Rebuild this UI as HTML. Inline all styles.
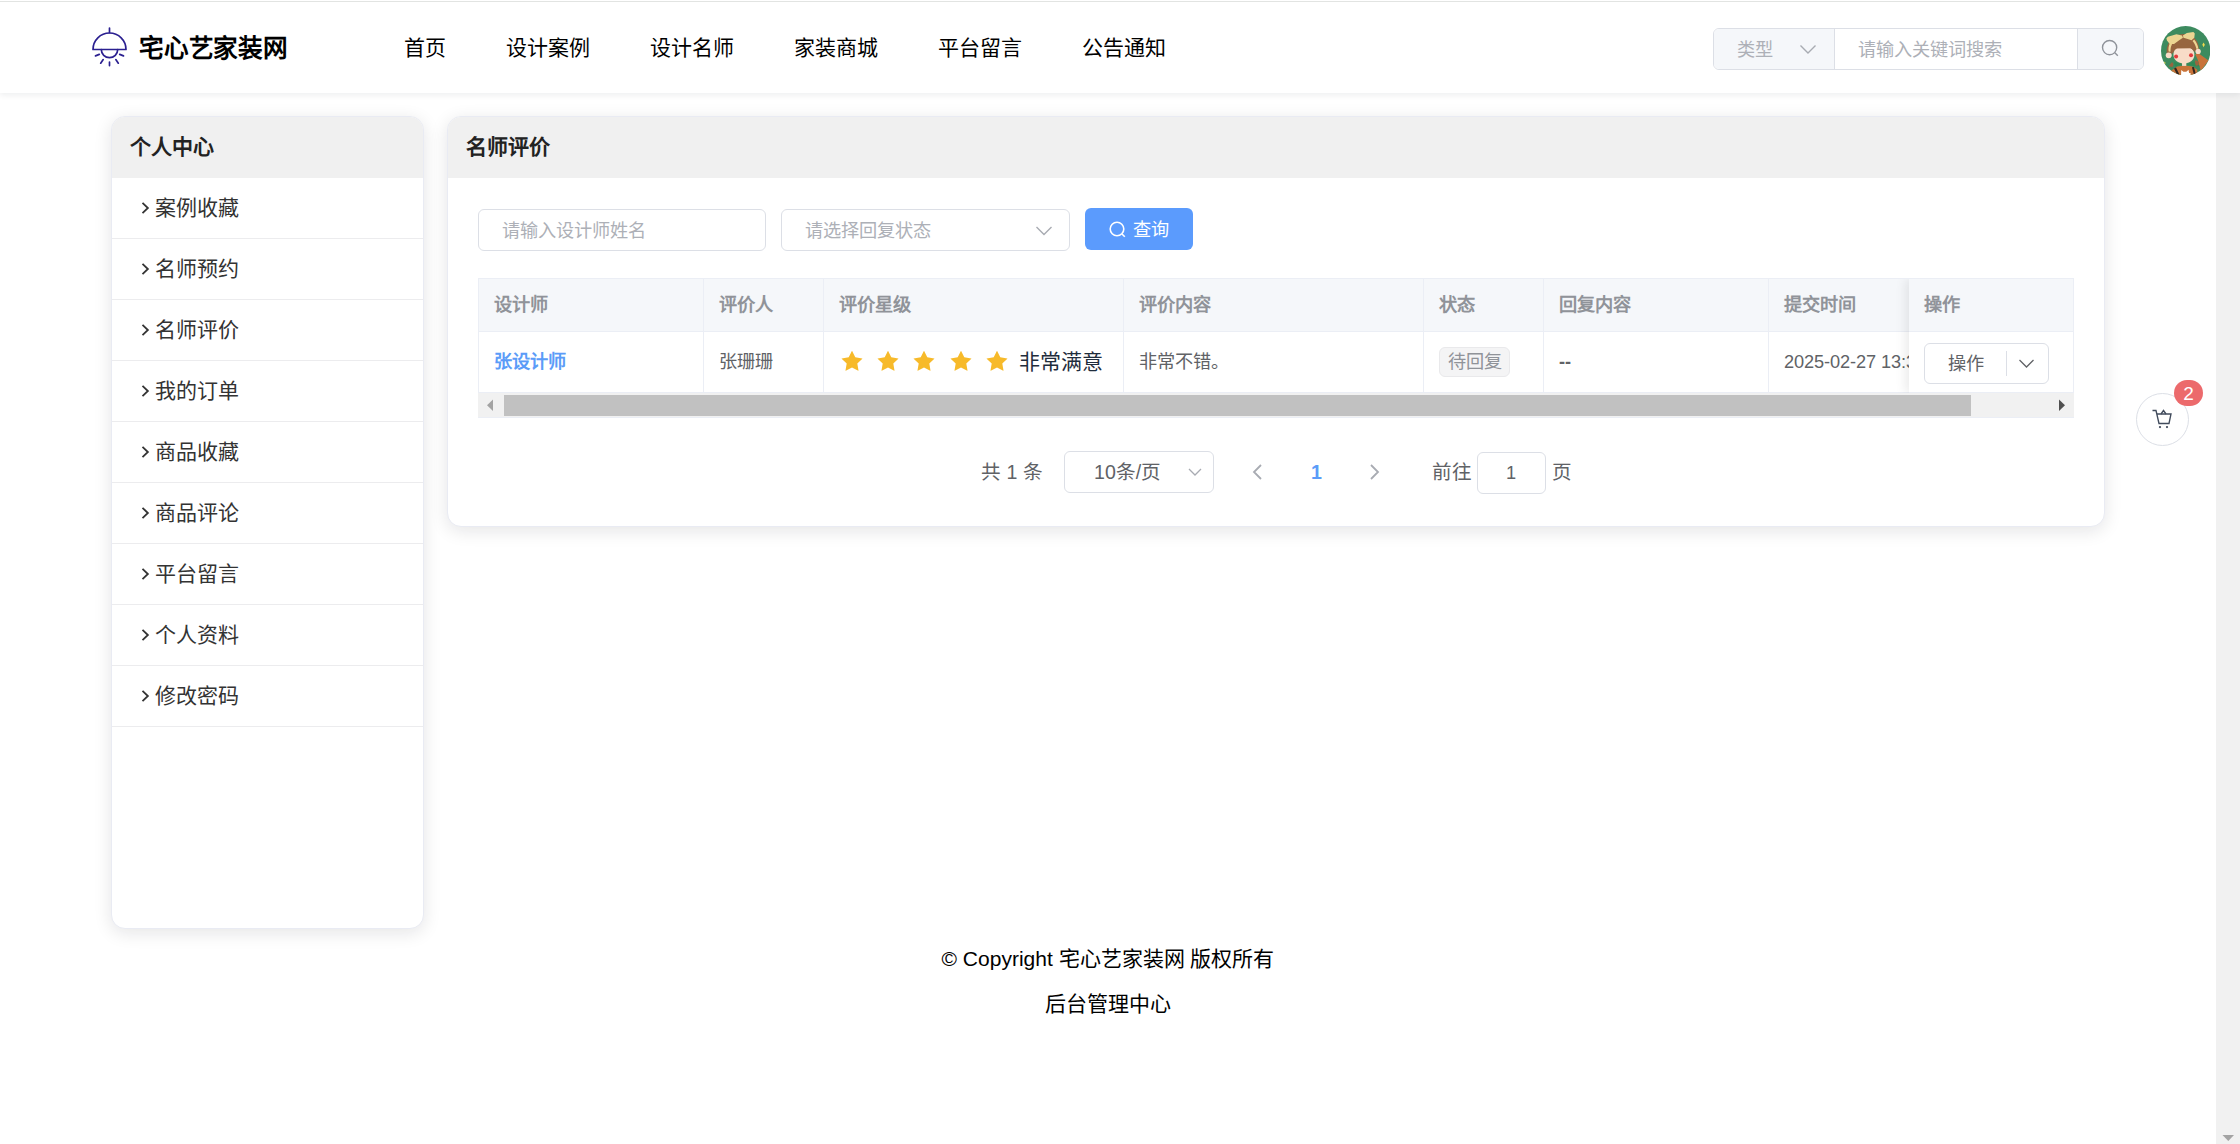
<!DOCTYPE html>
<html lang="zh-CN">
<head>
<meta charset="utf-8">
<title>宅心艺家装网</title>
<style>
*{box-sizing:border-box;margin:0;padding:0}
html,body{width:2240px;height:1144px;overflow:hidden;background:#fff}
body{position:relative;font-family:"Liberation Sans",sans-serif;color:#303133;font-size:18.2px}
.abs{position:absolute}
.t{position:absolute;white-space:nowrap;line-height:1}
/* header */
#hdr{position:absolute;left:0;top:0;width:2240px;height:93px;background:#fff;box-shadow:0 2px 6px rgba(0,21,41,.075);z-index:5}
#logo-t{left:139px;top:36.6px;font-size:24.6px;font-weight:700;color:#000;letter-spacing:-.2px}
.nav{top:37.4px;font-size:21px;color:#000}
/* search */
#sb{left:1713px;top:28px;width:431px;height:42px;border:1px solid #dcdfe6;border-radius:6px;background:#fff;overflow:hidden}
#sb .pre{position:absolute;left:0;top:0;width:121px;height:40px;background:#f5f7fa;border-right:1px solid #dcdfe6}
#sb .app{position:absolute;right:0;top:0;width:66px;height:40px;background:#f5f7fa;border-left:1px solid #dcdfe6}
.ph{color:#adb0b7;font-size:18.2px}
/* scrollbar */
#vsb{position:absolute;left:2216px;top:93px;width:24px;height:1051px;background:#f1f1f1}
/* cards */
.card{position:absolute;background:#fff;border:1px solid #e9ebf3;border-radius:14px;box-shadow:0 4px 18px rgba(20,20,30,.11);overflow:hidden}
.card .hd{position:absolute;left:0;top:0;right:0;height:61px;background:#f0f0f0}
.card .hd span{position:absolute;top:19px;font-size:21px;font-weight:700;color:#222;line-height:1;white-space:nowrap}
.mi{position:absolute;left:0;width:311px;height:61px;border-bottom:1px solid #ececee}
.mi span{position:absolute;left:43px;top:19px;font-size:21px;line-height:1;color:#333;white-space:nowrap}
.mi svg{position:absolute;left:29px;top:22px}
/* form */
.inp{position:absolute;height:42px;border:1px solid #dcdfe6;border-radius:6px;background:#fff}
.inp span{position:absolute;left:23px;top:11.600px;font-size:18.2px;line-height:1;color:#adb0b7;white-space:nowrap}
#qbtn{position:absolute;left:1085px;top:208px;width:108px;height:42px;border-radius:6px;background:#5b9bfd;color:#fff}
/* table */
#tb{position:absolute;left:478px;top:278px;width:1596px;height:115px;border-top:1px solid #ebeef5;border-left:1px solid #ebeef5;overflow:hidden;background:#fff}
#tb .hr{position:absolute;left:0;top:0;width:1596px;height:53px;background:#f5f7fa;border-bottom:1px solid #ebeef5}
#tb .br{position:absolute;left:0;top:53px;width:1596px;height:61px;border-bottom:1px solid #ebeef5}
.vl{position:absolute;top:0;width:1px;height:114px;background:#ebeef5}
.th{position:absolute;top:17.400px;font-size:18.2px;font-weight:700;color:#909399;line-height:1;white-space:nowrap}
.td{position:absolute;top:74px;font-size:18.2px;color:#606266;line-height:1;white-space:nowrap}
#fix{position:absolute;left:1430px;top:0;width:166px;height:114px;background:#fff;box-shadow:-4px 0 10px rgba(0,0,0,.08)}
#fix .fh{position:absolute;left:0;top:0;width:166px;height:53px;background:#f5f7fa;border-bottom:1px solid #ebeef5}
#hsb{position:absolute;left:478px;top:393px;width:1596px;height:24px;background:#f1f1f1}
#hsb .thumb{position:absolute;left:26px;top:2px;width:1467px;height:21px;background:#c1c1c1}
/* pagination */
.pg{position:absolute;font-size:19.6px;line-height:1;color:#606266;white-space:nowrap}
</style>
</head>
<body>
<!-- vertical scrollbar -->
<div id="vsb"><svg class="abs" style="left:6px;top:1041px" width="13" height="8" viewBox="0 0 13 8"><path d="M0.5 1h11.5L6.3 7z" fill="#a3a3a3"/></svg></div>

<!-- header -->
<div id="hdr"><div class="abs" style="left:0;top:1px;width:2240px;height:1px;background:#e2e4e2"></div>
  <svg class="abs" style="left:90px;top:25px" width="40" height="44" viewBox="0 0 40 44" fill="none" stroke="#2b2090" stroke-width="1.7" stroke-linecap="round" stroke-linejoin="round">
    <path d="M19.5 3v4.5"/>
    <path d="M3 24.5a16.5 16.5 0 0 1 33 0z"/>
    <path d="M11.3 24.5a8.2 8.2 0 0 0 16.4 0"/>
    <path d="M19.5 37v3.6M13.2 34.6l-2.5 3.6M25.8 34.6l2.5 3.6M9.3 29.4l-3.8 1.5M29.7 29.4l3.8 1.5"/>
  </svg>
  <div class="t" id="logo-t">宅心艺家装网</div>
  <div class="t nav" style="left:404px">首页</div>
  <div class="t nav" style="left:506px">设计案例</div>
  <div class="t nav" style="left:650px">设计名师</div>
  <div class="t nav" style="left:794px">家装商城</div>
  <div class="t nav" style="left:938px">平台留言</div>
  <div class="t nav" style="left:1082px">公告通知</div>
  <div class="abs" id="sb">
    <div class="pre"><div class="t ph" style="left:23px;top:12px">类型</div>
      <svg class="abs" style="left:85px;top:13px" width="18" height="14" viewBox="0 0 18 14" fill="none" stroke="#a8abb2" stroke-width="1.4"><path d="M1.5 3.5l7.5 7.5 7.5-7.5"/></svg>
    </div>
    <div class="t ph" style="left:144px;top:12px">请输入关键词搜索</div>
    <div class="app"><svg class="abs" style="left:22px;top:8.600px" width="20" height="20" viewBox="0 0 20 20" fill="none" stroke="#8f939a" stroke-width="1.4"><circle cx="9.6" cy="9.6" r="7.1"/><path d="M14.8 14.8l3 3"/></svg></div>
  </div>
  <!-- avatar -->
  <svg class="abs" style="left:2160.500px;top:25.800px" width="49.400" height="49.400" viewBox="0 0 50 50">
    <defs><clipPath id="avc"><circle cx="25" cy="25" r="25"/></clipPath></defs>
    <g clip-path="url(#avc)">
      <rect width="50" height="50" fill="#3d8b5f"/>
      <path d="M9 46l7.500-4.900 5.700-.9h3.900l5.700.9 4.800 2.900L37 50H8z" fill="#c8733a"/>
      <path d="M34.700 28.600l2.900-1.300 10.500 7.600-2.900 3.900-4.800 6.700-1.400-4.400-1.900-7.100z" fill="#c8733a"/>
      <path d="M13.200 36.400l8.100 2.400-7.200 2.300zM26.100 38.800l7.600-2.900 5.800 5.200-8.600-.9z" fill="#2f8a55"/>
      <rect x="21.300" y="37" width="4.300" height="3.400" fill="#f8dcc8"/>
      <path d="M11.200 36.400l1.500 2.400-1 2.800-4-.9zM35.200 34.400l3.300 2-.5 3.300-2.800.5-1-3.800z" fill="#97653f"/>
      <path d="M5.700 27c-.6-9.500 6-18.800 17.300-18.800 10.500 0 15.800 7.800 15.500 16.200-.6 2.400-3 3-4.300 1.200-3.500-5-17-5.800-21 .2-1.800 3.500-6.300 4.400-7.500 1.200z" fill="#97653f"/>
      <ellipse cx="7.800" cy="29.700" rx="3" ry="2.900" fill="#f8dcc8"/>
      <ellipse cx="37.600" cy="25.700" rx="2.700" ry="2.600" fill="#f8dcc8"/>
      <path d="M12.600 29c0-4.500 3-8 10.600-8s10.600 3.500 10.600 8c0 5-4.600 8.900-10.600 8.900S12.600 34 12.600 29z" fill="#f8dcc8"/>
      <path d="M12.400 27.500c.5-5.500 5-9 10.800-9s10.300 3 11 8.500c-1.500-2.800-3-4.400-4.600-4.600l-16 .3c-.6 1.400-1 3-1.200 4.800z" fill="#97653f"/>
      <path d="M8.900 17.500l2.300.9c-1.300 2.300-1.700 4.900-1.500 7.600l-2-.2c-.4-3 0-5.800 1.200-8.300zM33.600 13.600c2.200 2.500 3.700 5.600 4.200 9.300l-1.900.5c-.6-3.200-2-6-4-8.300z" fill="#ecd592"/>
      <path d="M5.500 12.400l1.400-1.400 8.700-2.600 5.700 1.200.9 2.400-3.800 2.400-5.200 3.800H8.900L6 14.800z" fill="#ecd592"/>
      <path d="M22.200 9.600l3.900-2.400 6.700-1.200 1.400 1.700-.5 4.300-2.800 2.400-4.800-1.500-3.400-.9z" fill="#ecd592"/>
      <circle cx="15.300" cy="30.900" r="2" fill="#e23a3a"/><circle cx="30.400" cy="29.700" r="2" fill="#e23a3a"/>
      <path d="M13.200 43.100l2-1.200 3.300 6.900-2 1zM31.300 41.800l2-.4 1.900 6.900-2 .5z" fill="#33261f"/>
      <path d="M20.300 50l.2-5.500 2.200 1.700h2.900l2.300-2 .5 3.300 1.700.3-.3 2.200z" fill="#fff"/>
      <path d="M43.100 16.600l1.300 2.300-1.300 2.600-1.300-2.600zM3.800 36l.8 1.400-.8 1.600-.8-1.600z" fill="#f0d94e"/>
    </g>
  </svg>
</div>

<!-- sidebar card -->
<div class="card" style="left:111px;top:116px;width:313px;height:813px">
  <div class="hd"><span style="left:18px">个人中心</span></div>
  <div class="mi" style="top:61px"><svg width="9" height="16" viewBox="0 0 9 16" fill="none" stroke="#333" stroke-width="1.8"><path d="M1.500 2.800l5.400 5.200-5.400 5.200"/></svg><span>案例收藏</span></div>
  <div class="mi" style="top:122px"><svg width="9" height="16" viewBox="0 0 9 16" fill="none" stroke="#333" stroke-width="1.8"><path d="M1.500 2.800l5.400 5.200-5.400 5.200"/></svg><span>名师预约</span></div>
  <div class="mi" style="top:183px"><svg width="9" height="16" viewBox="0 0 9 16" fill="none" stroke="#333" stroke-width="1.8"><path d="M1.500 2.800l5.400 5.200-5.400 5.200"/></svg><span>名师评价</span></div>
  <div class="mi" style="top:244px"><svg width="9" height="16" viewBox="0 0 9 16" fill="none" stroke="#333" stroke-width="1.8"><path d="M1.500 2.800l5.400 5.200-5.400 5.200"/></svg><span>我的订单</span></div>
  <div class="mi" style="top:305px"><svg width="9" height="16" viewBox="0 0 9 16" fill="none" stroke="#333" stroke-width="1.8"><path d="M1.500 2.800l5.400 5.200-5.400 5.200"/></svg><span>商品收藏</span></div>
  <div class="mi" style="top:366px"><svg width="9" height="16" viewBox="0 0 9 16" fill="none" stroke="#333" stroke-width="1.8"><path d="M1.500 2.800l5.400 5.200-5.400 5.200"/></svg><span>商品评论</span></div>
  <div class="mi" style="top:427px"><svg width="9" height="16" viewBox="0 0 9 16" fill="none" stroke="#333" stroke-width="1.8"><path d="M1.500 2.800l5.400 5.200-5.400 5.200"/></svg><span>平台留言</span></div>
  <div class="mi" style="top:488px"><svg width="9" height="16" viewBox="0 0 9 16" fill="none" stroke="#333" stroke-width="1.8"><path d="M1.500 2.800l5.400 5.200-5.400 5.200"/></svg><span>个人资料</span></div>
  <div class="mi" style="top:549px"><svg width="9" height="16" viewBox="0 0 9 16" fill="none" stroke="#333" stroke-width="1.8"><path d="M1.500 2.800l5.400 5.200-5.400 5.200"/></svg><span>修改密码</span></div>
</div>

<!-- main card -->
<div class="card" style="left:447px;top:116px;width:1658px;height:411px">
  <div class="hd"><span style="left:18px">名师评价</span></div>
</div>

<!-- filter row -->
<div class="inp" style="left:478px;top:209px;width:288px"><span>请输入设计师姓名</span></div>
<div class="inp" style="left:781px;top:209px;width:289px"><span>请选择回复状态</span>
  <svg class="abs" style="left:253px;top:14px" width="18" height="14" viewBox="0 0 18 14" fill="none" stroke="#a8abb2" stroke-width="1.4"><path d="M1.500 3l7.500 7.500 7.500-7.500"/></svg>
</div>
<div id="qbtn">
  <svg class="abs" style="left:23px;top:11.600px" width="19" height="19" viewBox="0 0 19 19" fill="none" stroke="#fff" stroke-width="1.6"><circle cx="9" cy="9" r="6.800"/><path d="M14 14l2.800 2.800"/></svg>
  <div class="t" style="left:48px;top:13.200px;font-size:18.2px;color:#fff">查询</div>
</div>

<!-- table -->
<div id="tb">
  <div class="hr"></div><div class="br"></div>
  <div class="vl" style="left:224px"></div><div class="vl" style="left:344px"></div><div class="vl" style="left:644px"></div>
  <div class="vl" style="left:944px"></div><div class="vl" style="left:1064px"></div><div class="vl" style="left:1289px"></div>
  <div class="th" style="left:15px">设计师</div><div class="th" style="left:240px">评价人</div><div class="th" style="left:360px">评价星级</div>
  <div class="th" style="left:660px">评价内容</div><div class="th" style="left:960px">状态</div><div class="th" style="left:1080px">回复内容</div><div class="th" style="left:1305px">提交时间</div>
  <div class="td" style="left:15px;font-weight:700;color:#5b9cf8">张设计师</div>
  <div class="td" style="left:240px">张珊珊</div>
  <div class="abs" id="stars" style="left:358.500px;top:68px;width:180px;height:28px"><svg class="abs" style="left:0.0px;top:0" width="28" height="28" viewBox="0 0 1024 1024"><path fill="#f7ba2a" d="M283.84 867.84 512 747.776l228.16 120.064a6.4 6.4 0 0 0 9.28-6.72l-43.52-254.08 184.512-179.904a6.4 6.4 0 0 0-3.52-10.88l-255.104-37.12L517.76 147.904a6.4 6.4 0 0 0-11.520 0L392.192 379.072l-255.104 37.120a6.4 6.4 0 0 0-3.520 10.880L318.080 606.976l-43.584 254.080a6.4 6.4 0 0 0 9.280 6.720z"/></svg><svg class="abs" style="left:36.4px;top:0" width="28" height="28" viewBox="0 0 1024 1024"><path fill="#f7ba2a" d="M283.84 867.84 512 747.776l228.16 120.064a6.4 6.4 0 0 0 9.28-6.72l-43.52-254.08 184.512-179.904a6.4 6.4 0 0 0-3.52-10.88l-255.104-37.12L517.76 147.904a6.4 6.4 0 0 0-11.520 0L392.192 379.072l-255.104 37.120a6.4 6.4 0 0 0-3.520 10.880L318.080 606.976l-43.584 254.080a6.4 6.4 0 0 0 9.280 6.720z"/></svg><svg class="abs" style="left:72.8px;top:0" width="28" height="28" viewBox="0 0 1024 1024"><path fill="#f7ba2a" d="M283.84 867.84 512 747.776l228.16 120.064a6.4 6.4 0 0 0 9.28-6.72l-43.52-254.08 184.512-179.904a6.4 6.4 0 0 0-3.52-10.88l-255.104-37.12L517.76 147.904a6.4 6.4 0 0 0-11.520 0L392.192 379.072l-255.104 37.120a6.4 6.4 0 0 0-3.520 10.880L318.080 606.976l-43.584 254.080a6.4 6.4 0 0 0 9.280 6.720z"/></svg><svg class="abs" style="left:109.2px;top:0" width="28" height="28" viewBox="0 0 1024 1024"><path fill="#f7ba2a" d="M283.84 867.84 512 747.776l228.16 120.064a6.4 6.4 0 0 0 9.28-6.72l-43.52-254.08 184.512-179.904a6.4 6.4 0 0 0-3.52-10.88l-255.104-37.12L517.76 147.904a6.4 6.4 0 0 0-11.520 0L392.192 379.072l-255.104 37.120a6.4 6.4 0 0 0-3.520 10.880L318.080 606.976l-43.584 254.080a6.4 6.4 0 0 0 9.280 6.720z"/></svg><svg class="abs" style="left:145.6px;top:0" width="28" height="28" viewBox="0 0 1024 1024"><path fill="#f7ba2a" d="M283.84 867.84 512 747.776l228.16 120.064a6.4 6.4 0 0 0 9.28-6.72l-43.52-254.08 184.512-179.904a6.4 6.4 0 0 0-3.52-10.88l-255.104-37.12L517.76 147.904a6.4 6.4 0 0 0-11.520 0L392.192 379.072l-255.104 37.120a6.4 6.4 0 0 0-3.520 10.880L318.080 606.976l-43.584 254.080a6.4 6.4 0 0 0 9.280 6.720z"/></svg></div>
  <div class="td" style="left:540px;top:72px;font-size:21px;color:#1f2d3d">非常满意</div>
  <div class="td" style="left:660px">非常不错。</div>
  <div class="abs" style="left:960px;top:68px;width:71px;height:30px;background:#f4f4f5;border:1px solid #e9e9eb;border-radius:6px"><div class="t" style="left:8px;top:5px;font-size:18.2px;color:#909399">待回复</div></div>
  <div class="td" style="left:1080px;font-weight:700">--</div>
  <div class="td" style="left:1305px;letter-spacing:-.1px">2025-02-27 13:36:21</div>
  <div id="fix"><div class="fh"></div><div class="abs" style="left:0;top:113px;width:166px;height:1px;background:#ebeef5"></div><div class="vl" style="left:164px"></div>
    <div class="th" style="left:15px">操作</div>
    <div class="abs" style="left:15px;top:64px;width:125px;height:41px;border:1px solid #dcdfe6;border-radius:6px;background:#fff">
      <div class="t" style="left:23px;top:10.500px;font-size:18.2px;color:#606266">操作</div>
      <div class="abs" style="left:81px;top:7px;width:1px;height:25px;background:#dcdfe6"></div>
      <svg class="abs" style="left:93px;top:12.500px" width="17" height="13" viewBox="0 0 17 13" fill="none" stroke="#606266" stroke-width="1.25"><path d="M1.500 3l7 7 7-7"/></svg>
    </div>
  </div>
</div>
<div class="abs" style="left:478px;top:417px;width:1596px;height:1px;background:#ebeef5"></div>
<div id="hsb"><div class="thumb"></div>
  <svg class="abs" style="left:8px;top:6px" width="8" height="13" viewBox="0 0 8 13"><path d="M7 0.500v11.500L1 6.300z" fill="#a3a3a3"/></svg>
  <svg class="abs" style="left:1580px;top:6px" width="8" height="13" viewBox="0 0 8 13"><path d="M1 0.500v11.500L7 6.300z" fill="#505050"/></svg>
</div>

<!-- pagination -->
<div class="pg" style="left:981px;top:463px">共 1 条</div>
<div class="abs" style="left:1064px;top:451px;width:150px;height:42px;border:1px solid #dcdfe6;border-radius:6px"></div>
<div class="pg" style="left:1094px;top:463px">10条/页</div>
<svg class="abs" style="left:1187px;top:466px" width="16" height="12" viewBox="0 0 16 12" fill="none" stroke="#a8abb2" stroke-width="1.3"><path d="M2 3l6 6 6-6"/></svg>
<svg class="abs" style="left:1251px;top:463px" width="12" height="18" viewBox="0 0 12 18" fill="none" stroke="#a8abb2" stroke-width="1.8"><path d="M10 2L3 9l7 7"/></svg>
<div class="pg" style="left:1311px;top:463px;font-weight:700;color:#5b9cf8">1</div>
<svg class="abs" style="left:1369px;top:463px" width="12" height="18" viewBox="0 0 12 18" fill="none" stroke="#a8abb2" stroke-width="1.8"><path d="M2 2l7 7-7 7"/></svg>
<div class="pg" style="left:1432px;top:463px">前往</div>
<div class="abs" style="left:1477px;top:452px;width:69px;height:42px;border:1px solid #dcdfe6;border-radius:6px"></div>
<div class="pg" style="left:1506px;top:464px;font-size:18.2px">1</div>
<div class="pg" style="left:1552px;top:463px">页</div>

<!-- cart -->
<div class="abs" style="left:2136px;top:393px;width:53px;height:53px;border:1px solid #dcdfe6;border-radius:50%;background:#fff"></div>
<svg class="abs" style="left:2151px;top:408px" width="22" height="22" viewBox="0 0 22 22" fill="none" stroke="#414b5c" stroke-width="1.35"><path d="M1.500 2.500h3.500l3 13h10l2-9.500h-14"/><path d="M10 6l2.500-3.500 2.500 3.500"/><circle cx="9" cy="19" r=".45" fill="#414b5c"/><circle cx="16" cy="19" r=".45" fill="#414b5c"/></svg>
<div class="abs" style="left:2174px;top:380px;width:29px;height:26px;border-radius:13px;background:#ec6a6c;color:#fff;font-size:19px;line-height:27.400px;text-align:center">2</div>

<!-- footer -->
<div class="t" style="left:0;width:2216px;text-align:center;top:948px;font-size:21px;color:#000">© Copyright 宅心艺家装网 版权所有</div>
<div class="t" style="left:0;width:2216px;text-align:center;top:993px;font-size:21px;color:#000">后台管理中心</div>
</body>
</html>
